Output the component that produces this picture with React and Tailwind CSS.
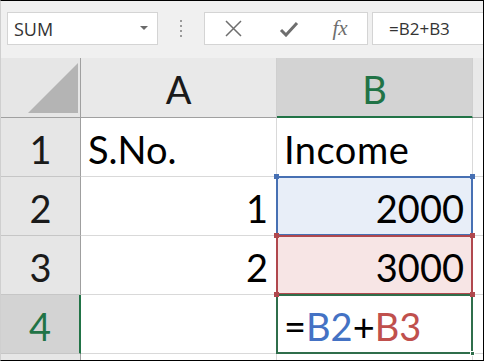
import React from 'react';

// Excel-like formula bar + grid with a simple B2+B3 sum

function Corner({ className }) {
  return <span className={`absolute w-[5px] h-[5px] z-20 ${className}`} />;
}

export default function App() {
  const cell = "border-r border-b border-[#d9d9d9] flex items-end leading-none pb-[8px] text-[38px] text-black";
  const rowHead = "bg-[#e6e6e6] border-r border-r-[#9f9f9f] border-b border-b-[#c6c6c6] flex items-end justify-center leading-none pb-[8px] text-[38px] text-[#1a1a1a]";

  return (
    <div className="w-[484px] h-[361px] overflow-hidden bg-white border border-black border-l-[#cfcfcf] flex flex-col font-['Lato',sans-serif]">
      {/* Formula bar */}
      <div className="h-[57px] shrink-0 bg-[#f0f0f0] flex items-start pt-[11px] pl-[6px] font-['Open_Sans',sans-serif]">
        <div className="w-[151px] h-[33px] bg-white border border-[#d4d4d4] flex items-center justify-between pl-[6px] pr-[9px]">
          <span className="text-[18px] text-[#333] leading-none">SUM</span>
          <svg width="8" height="5" viewBox="0 0 8 5">
            <path d="M0 0 L8 0 L4 4 Z" fill="#6a6a6a" />
          </svg>
        </div>
        <div className="w-[46px] h-[33px] flex flex-col items-center justify-center gap-[3px]">
          <span className="w-[2px] h-[2px] bg-[#9a9a9a]" />
          <span className="w-[2px] h-[2px] bg-[#9a9a9a]" />
          <span className="w-[2px] h-[2px] bg-[#9a9a9a]" />
          <span className="w-[2px] h-[2px] bg-[#9a9a9a]" />
        </div>
        <div className="w-[164px] h-[33px] bg-white border border-[#d4d4d4] flex items-center">
          <div className="w-[56px] flex justify-center">
            <svg width="19" height="19" viewBox="0 0 19 19">
              <path d="M2 2 L17 17 M17 2 L2 17" stroke="#6e6e6e" strokeWidth="1.5" fill="none" />
            </svg>
          </div>
          <div className="w-[56px] flex justify-center">
            <svg width="20" height="16" viewBox="0 0 20 16">
              <path d="M2 9 L7 14 L18 2" stroke="#6e6e6e" strokeWidth="3" fill="none" />
            </svg>
          </div>
          <div className="flex-1 flex justify-center pr-[4px]">
            <span className="font-['Liberation_Serif',serif] italic text-[21px] text-[#6e6e6e] leading-none">fx</span>
          </div>
        </div>
        <div className="ml-[4px] flex-1 h-[33px] bg-white border border-r-0 border-[#d4d4d4] flex items-center pl-[16px]">
          <span className="text-[17px] text-[#333] leading-none">=B2+B3</span>
        </div>
      </div>

      {/* Grid */}
      <div className="flex-1 grid grid-cols-[80px_196px_196px_1fr] grid-rows-[60px_59px_59px_59px_59px_1fr]">
        {/* header row */}
        <div className="bg-[#e6e6e6] border-r border-b border-[#a0a0a0] flex items-end justify-end pr-[2px] pb-[4px]">
          <svg width="50" height="50" viewBox="0 0 50 50">
            <path d="M0 50 L50 50 L50 0 Z" fill="#b4b4b4" />
          </svg>
        </div>
        <div className="bg-[#e9e9e9] border-r border-r-[#cfcfcf] border-b border-b-[#a0a0a0] flex items-end justify-center leading-none pb-[9px] text-[38px] text-[#1a1a1a]">A</div>
        <div className="bg-[#d3d3d3] border-r border-r-[#cfcfcf] border-b-2 border-b-[#217346] flex items-end justify-center leading-none pb-[8px] text-[38px] text-[#217346]">B</div>
        <div className="bg-[#e9e9e9] border-b border-b-[#a0a0a0]" />

        {/* row 1 */}
        <div className={rowHead}>1</div>
        <div className={`${cell} bg-white pl-[7px]`}>S.No.</div>
        <div className={`${cell} bg-white pl-[7px] tracking-[0.5px]`}>Income</div>
        <div className="border-b border-[#d9d9d9]" />

        {/* row 2 */}
        <div className={rowHead}>2</div>
        <div className={`${cell} bg-white justify-end pr-[8px]`}>1</div>
        <div className={`${cell} relative justify-end pr-[8px] bg-[#e8eef8]`}>
          <div className="absolute -top-px -left-px -right-px -bottom-px border-2 border-[#4770b3] z-10" />
          <Corner className="-top-[3px] -left-[3px] bg-[#4770b3]" />
          <Corner className="-top-[3px] -right-[3px] bg-[#4770b3]" />
          <span className="relative">2000</span>
        </div>
        <div className="border-b border-[#d9d9d9]" />

        {/* row 3 */}
        <div className={rowHead}>3</div>
        <div className={`${cell} bg-white justify-end pr-[8px]`}>2</div>
        <div className={`${cell} relative justify-end pr-[8px] bg-[#f7e5e5]`}>
          <div className="absolute -top-px -left-px -right-px -bottom-px border-2 border-[#b0484e] z-10" />
          <Corner className="-top-[3px] -left-[3px] bg-[#b0484e]" />
          <Corner className="-top-[3px] -right-[3px] bg-[#b0484e]" />
          <Corner className="-bottom-[3px] -left-[3px] bg-[#b0484e]" />
          <Corner className="-bottom-[3px] -right-[3px] bg-[#b0484e]" />
          <span className="relative">3000</span>
        </div>
        <div className="border-b border-[#d9d9d9]" />

        {/* row 4 */}
        <div className="bg-[#d3d3d3] border-r-2 border-r-[#217346] border-b border-b-[#c6c6c6] flex items-end justify-center leading-none pb-[8px] text-[38px] text-[#217346]">4</div>
        <div className={`${cell} bg-white`} />
        <div className={`${cell} bg-white relative pl-[7px]`}>
          <div className="absolute -top-px -left-px -right-px -bottom-px border-2 border-[#2f6e4b] z-10" />
          <Corner className="-bottom-[3px] -right-[3px] bg-[#2f6e4b] border border-white" />
          <span className="relative">
            =<span className="text-[#4472c4]">B2</span>+<span className="text-[#c0504d]">B3</span>
          </span>
        </div>
        <div className="border-b border-[#d9d9d9]" />

        {/* partial row 5 */}
        <div className="bg-[#e6e6e6] border-r border-r-[#9f9f9f]" />
        <div className="border-r border-[#d9d9d9]" />
        <div className="border-r border-[#d9d9d9]" />
        <div />
      </div>
    </div>
  );
}
